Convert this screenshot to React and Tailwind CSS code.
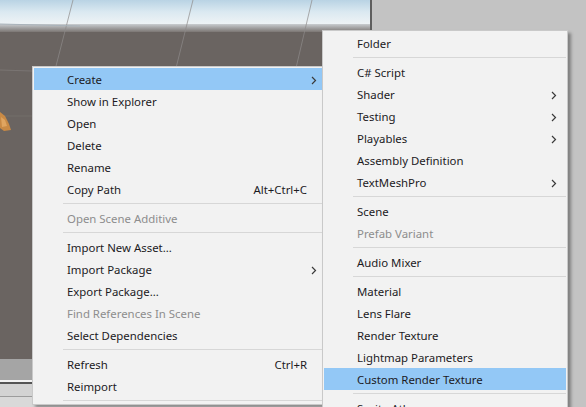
import React from 'react';

const font = { fontFamily: '"Noto Sans", "Liberation Sans", sans-serif' };

const leftItems = [
  { label: 'Create', sub: true, active: true },
  { label: 'Show in Explorer' },
  { label: 'Open' },
  { label: 'Delete' },
  { label: 'Rename' },
  { label: 'Copy Path', shortcut: 'Alt+Ctrl+C' },
  { sep: true },
  { label: 'Open Scene Additive', disabled: true },
  { sep: true },
  { label: 'Import New Asset...' },
  { label: 'Import Package', sub: true },
  { label: 'Export Package...' },
  { label: 'Find References In Scene', disabled: true },
  { label: 'Select Dependencies' },
  { sep: true },
  { label: 'Refresh', shortcut: 'Ctrl+R' },
  { label: 'Reimport' },
  { sep: true },
];

const rightItems = [
  { label: 'Folder' },
  { sep: true },
  { label: 'C# Script' },
  { label: 'Shader', sub: true },
  { label: 'Testing', sub: true },
  { label: 'Playables', sub: true },
  { label: 'Assembly Definition' },
  { label: 'TextMeshPro', sub: true },
  { sep: true },
  { label: 'Scene' },
  { label: 'Prefab Variant', disabled: true },
  { sep: true },
  { label: 'Audio Mixer' },
  { sep: true },
  { label: 'Material' },
  { label: 'Lens Flare' },
  { label: 'Render Texture' },
  { label: 'Lightmap Parameters' },
  { label: 'Custom Render Texture', active: true },
  { sep: true },
  { label: 'Sprite Atlas' },
];

function Chevron() {
  return (
    <svg width="6" height="9" viewBox="0 0 6 9" className="shrink-0">
      <polyline points="1,1 4.5,4.5 1,8" fill="none" stroke="#3a3a3a" strokeWidth="1.2" />
    </svg>
  );
}

function Menu({ items, className }) {
  return (
    <div
      className={`absolute bg-[#f2f2f2] border border-[#c9c9c9] pt-px shadow-[3px_3px_3px_rgba(0,0,0,0.35)] text-[11.4px] ${className}`}
      style={font}
    >
      {items.map((it, i) =>
        it.sep ? (
          <div key={i} className="h-[7px] flex items-center pl-[30px] pr-px">
            <div className="h-px w-full bg-[#d7d7d7]" />
          </div>
        ) : (
          <div
            key={i}
            className={`h-[22px] mx-px pt-[2px] flex items-center pl-[33px] pr-[9px] ${
              it.active ? 'bg-[#93c8f6]' : ''
            } ${it.disabled ? 'text-[#8d8d8d]' : 'text-[#1c1a1e]'}`}
          >
            <span className="flex-1 whitespace-nowrap leading-none">{it.label}</span>
            {it.shortcut && <span className="whitespace-nowrap leading-none mr-[10px]">{it.shortcut}</span>}
            {it.sub && <Chevron />}
          </div>
        )
      )}
    </div>
  );
}

export default function App() {
  return (
    <div className="relative w-[586px] h-[407px] overflow-hidden bg-[#c3c3c3]">
      <div className="flex h-full">
        {/* scene view */}
        <div className="relative w-[370px] flex flex-col">
          <div className="h-[24px] bg-gradient-to-b from-[#b9d3e4] via-[#dbe9f1] to-[#eef3f5]" />
          <div className="h-[8px] bg-gradient-to-b from-[#c9cdd0] to-[#7c7774]" />
          <div className="flex-1 bg-[#6a6461]" />
          <div className="h-[21px] bg-[#a5a5a5]" />
          <div className="h-[2px] bg-[#f2f2f2]" />
          <div className="h-[2px] bg-[#545454]" />
          <div className="h-[12px] bg-[#d3d3d3]" />
          <div className="h-px bg-[#9c9c9c]" />
          <div className="h-[10px] bg-[#d9d9d9]" />
          <svg className="absolute left-0 top-0" width="370" height="358">
            <line x1="73" y1="0" x2="56" y2="66" stroke="#8f8c8b" strokeWidth="1" opacity="0.7" />
            <line x1="193" y1="0" x2="175" y2="72" stroke="#8f8c8b" strokeWidth="1" opacity="0.7" />
            <line x1="312" y1="0" x2="296" y2="68" stroke="#8f8c8b" strokeWidth="1" opacity="0.7" />
            <line x1="0" y1="24" x2="80" y2="26" stroke="#a9b3ba" strokeWidth="1" />
            <line x1="0" y1="70" x2="32" y2="71" stroke="#7a7573" strokeWidth="1" />
            <line x1="0" y1="116" x2="32" y2="116" stroke="#736e6b" strokeWidth="1" />
            <path d="M0 112 L5 116 L9 124 L11 130 L4 131 L0 128 Z" fill="#c98a45" />
            <path d="M1 117 L5 120 L7 126 L2 127 Z" fill="#e0a560" />
          </svg>
        </div>
        <div className="w-[2px] bg-[#5e5e5e]" />
        <div className="flex-1 bg-[#c3c3c3]" />
      </div>

      <Menu items={leftItems} className="left-[32px] top-[66px] w-[296px]" />
      <Menu items={rightItems} className="left-[322px] top-[30px] w-[246px]" />
    </div>
  );
}
